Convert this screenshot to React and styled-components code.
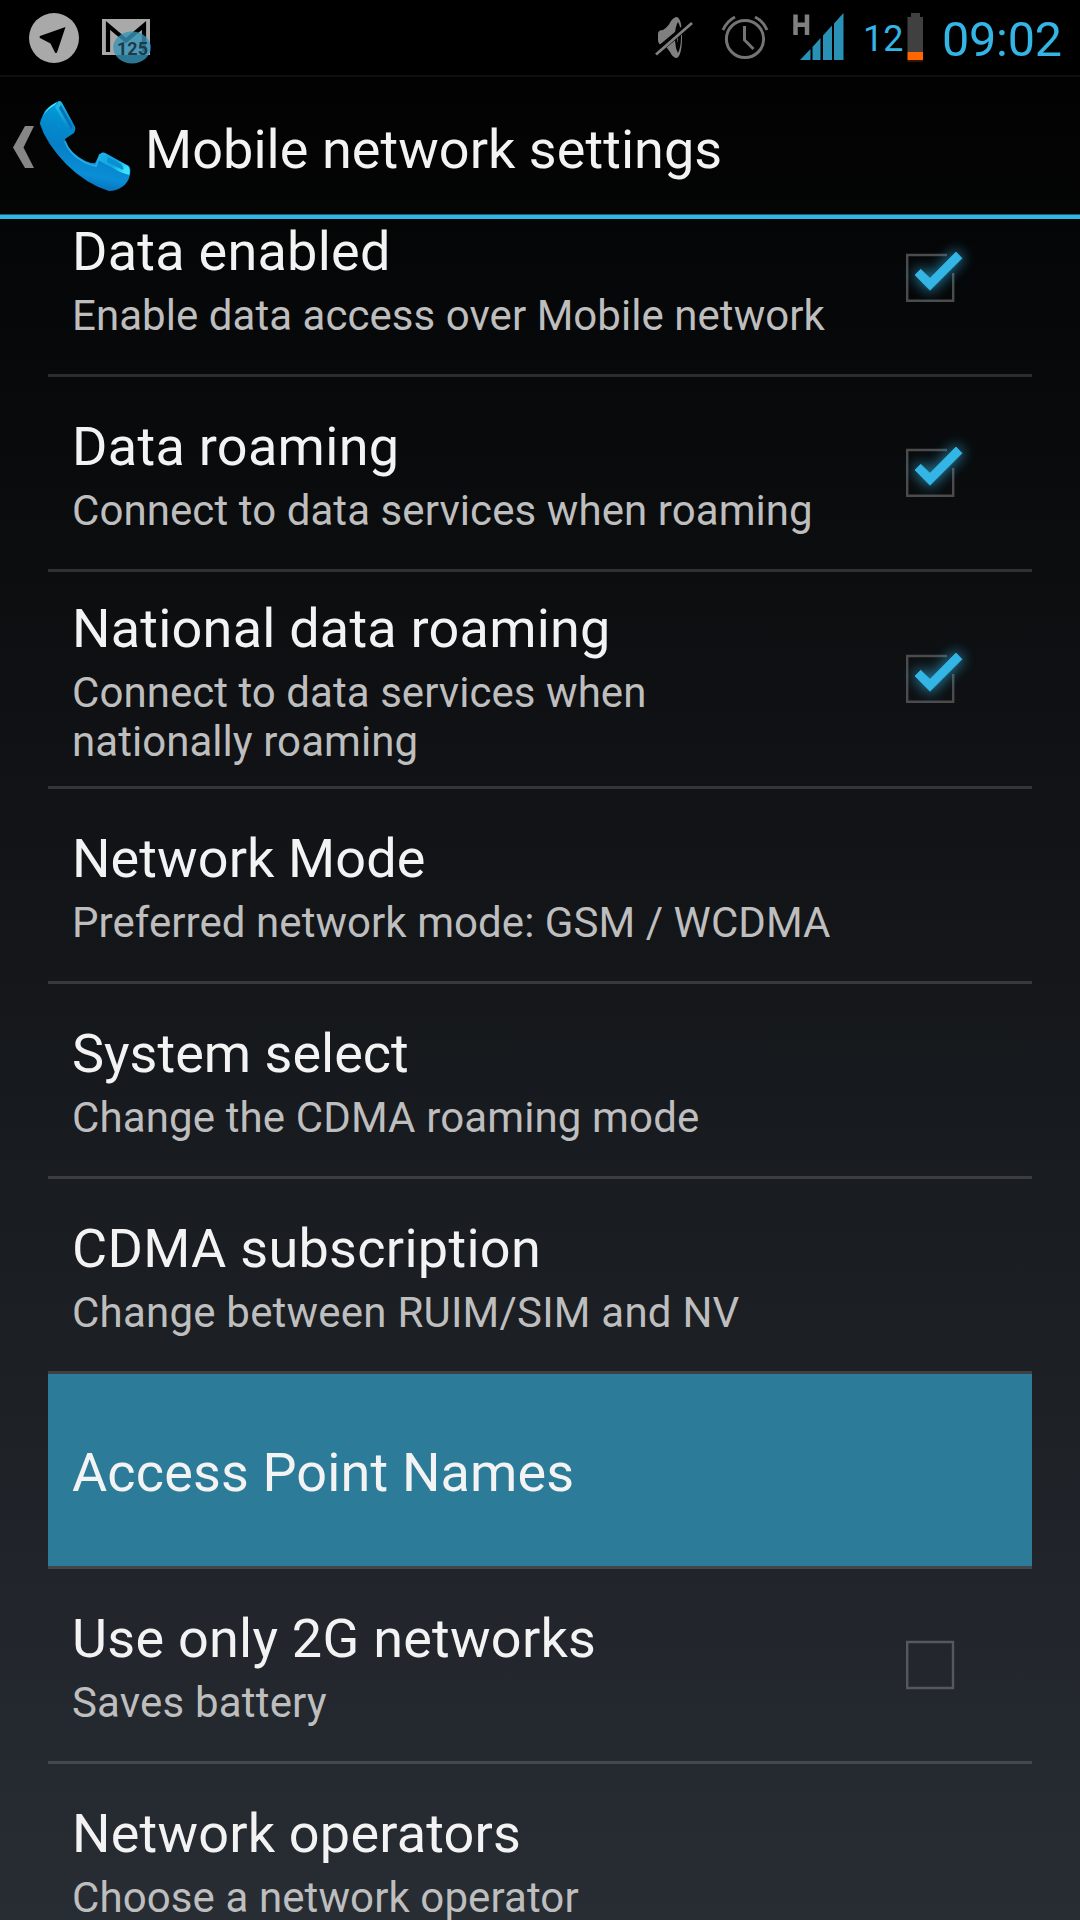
import React from 'react';
import styled, { createGlobalStyle } from 'styled-components';

const GlobalStyle = createGlobalStyle`
  * {
    box-sizing: border-box;
  }

  body {
    margin: 0;
    background: #000000;
    font-family: Roboto, 'Noto Sans', sans-serif;
  }
`;

const Screen = styled.div`
  display: flex;
  flex-direction: column;
  width: 1080px;
  height: 1920px;
  overflow: hidden;
  background: linear-gradient(#000000, #282d34);
`;

const StatusBar = styled.div`
  display: flex;
  flex: none;
  justify-content: space-between;
  height: 75px;
  padding: 0 16px 0 29px;
  background: #000000;
`;

const StatusGroup = styled.div`
  display: flex;
  align-items: flex-start;
`;

const StatusIcon = styled.svg`
  flex: none;
  display: block;
  width: ${(props) => props.$width}px;
  height: 75px;
  margin-left: ${(props) => props.$gap || 0}px;
`;

const BatteryLevel = styled.span`
  width: 43px;
  margin-left: 18px;
  padding-top: 18px;
  color: #33b5e5;
  font-size: 36px;
  line-height: 42px;
`;

const Clock = styled.span`
  width: 124px;
  margin-left: 16px;
  padding: 11px 0 0 2px;
  color: #33b5e5;
  font-size: 48.5px;
  line-height: 57px;
  letter-spacing: -0.2px;
`;

const ActionBar = styled.div`
  display: flex;
  flex: none;
  align-items: flex-start;
  height: 144px;
  padding-left: 12px;
  border-top: 2px solid #0e0e0e;
  border-bottom: 4px solid #33b5e5;
  box-shadow: inset 0 -1px 0 #1c6078;
`;

const HeaderIcon = styled.svg`
  flex: none;
  display: block;
  width: ${(props) => props.$width}px;
  height: 138px;
`;

const Heading = styled.h1`
  margin: 0 0 0 11px;
  padding-top: 41px;
  color: #f3f3f3;
  font-size: 54px;
  font-weight: 400;
  line-height: 64px;
  white-space: nowrap;
  letter-spacing: 0.05px;
`;

const List = styled.div`
  flex: 1;
  min-height: 0;
  overflow: hidden;
  padding: 0 48px;
`;

/* the list is scrolled down a little, so the first row starts under the bar */
const Scroller = styled.div`
  margin-top: -37px;
`;

const Row = styled.div`
  display: flex;
  align-items: center;
  justify-content: space-between;
  height: ${(props) => (props.$tall ? 217 : 195)}px;
  padding: 0 48px 0 24px;
  border-bottom: 3px solid rgba(255, 255, 255, 0.15);
  background: ${(props) => (props.$pressed ? '#2c7b99' : 'transparent')};
  background-clip: padding-box;
`;

const Labels = styled.div`
  padding-top: ${(props) => (props.$single ? 6 : 4)}px;
`;

const Title = styled.div`
  color: #f3f3f3;
  font-size: 54px;
  line-height: 64px;
  white-space: nowrap;
  letter-spacing: ${(props) => props.$spacing || 0}px;
`;

const Summary = styled.div`
  margin-top: 7px;
  color: #bebebe;
  font-size: 42px;
  line-height: 49px;
  white-space: pre;
  letter-spacing: ${(props) => props.$spacing || 0}px;
`;

const CheckSvg = styled.svg`
  flex: none;
  display: block;
  width: 96px;
  height: 96px;
  overflow: visible;
`;

const Checkbox = ({ checked }) => (
  <CheckSvg viewBox="0 0 96 96" fill="none">
    <defs>
      <filter id="glow" x="-60%" y="-60%" width="220%" height="220%">
        <feGaussianBlur stdDeviation="6.500" />
      </filter>
    </defs>
    {checked ? (
      <>
        <path d="M59 25H19.200v45.800h46V43" stroke="#4b4b4b" strokeWidth="2.400" />
        <path
          d="M27 45l5.7-5.7 9.3 9L68 22l6 6.3-32 32z"
          fill="#33b5e5"
          stroke="#33b5e5"
          strokeWidth="4"
          opacity="0.65"
          filter="url(#glow)"
        />
        <path
          d="M27 45l5.7-5.7 9.3 9L68 22l6 6.3-32 32z"
          fill="#33b5e5"
          stroke="#33b5e5"
          strokeWidth="0.800"
        />
      </>
    ) : (
      <path d="M19.200 25h45.800v46H19.200z" stroke="#55595c" strokeWidth="2.400" />
    )}
  </CheckSvg>
);

const TelegramIcon = () => (
  <StatusIcon $width={50} viewBox="29 0 50 75">
    <circle cx="54" cy="38" r="25" fill="#a9a9a9" />
    <path
      d="M65.5 27L57 52.5q-1 1-2 0L50.5 43.500 40 38q-1-1 0-2z"
      fill="#000000"
    />
  </StatusIcon>
);

const MailIcon = () => (
  <StatusIcon $width={50} $gap={22} viewBox="101 0 50 75">
    <path d="M102 19h48v36h-48z" fill="#a9a9a9" />
    <path
      d="M108 52V25.500l18 15 18-15V52"
      fill="none"
      stroke="#000000"
      strokeWidth="4.200"
    />
    <ellipse
      cx="132"
      cy="47.500"
      rx="18.800"
      ry="16"
      fill="#3593b8"
      fillOpacity="0.8"
    />
    <text
      x="132.500"
      y="55"
      textAnchor="middle"
      fill="#1d3a48"
      fontSize="18"
      fontWeight="700"
      fontFamily="Roboto, sans-serif"
    >
      125
    </text>
  </StatusIcon>
);

const MuteIcon = () => (
  <StatusIcon $width={40} viewBox="654 0 40 75">
    <path
      d="M658 34q0-4 5-4 5-3 8-9 3-4 6-4 5 2 5 20t-5 21q-4 0-7-6-3-5-7-7-5 0-5-5z"
      fill="#808080"
    />
    <path d="M678 22q3 5 3 15t-3 16q-3-5-3-16t3-15z" fill="#000000" />
    <path d="M677 31q2 6 0 12z" fill="#808080" />
    <path d="M655 53l37-31" stroke="#000000" strokeWidth="6.500" />
    <path d="M656 54.500L692 23" stroke="#808080" strokeWidth="2.800" />
  </StatusIcon>
);

const AlarmIcon = () => (
  <StatusIcon $width={48} $gap={27} viewBox="721 0 48 75">
    <g fill="none" stroke="#747474" strokeWidth="3">
      <circle cx="745" cy="39" r="18.600" />
      <path d="M744.500 26v14l9 9" />
      <path d="M723 30q4-9 12-13M767 30q-4-9-12-13" />
    </g>
  </StatusIcon>
);

const SignalIcon = () => (
  <StatusIcon $width={52} $gap={24} viewBox="793 0 52 75">
    <path
      d="M795.500 14.500v20.500M807 14.500v20.500M795.500 24.700H807"
      fill="none"
      stroke="#808080"
      strokeWidth="4.500"
    />
    <path
      d="M800 60l10.500-11v11zM812.500 60V47l8-9v22zM823 60V35.500l9-10V60zM834 60V23.500L843.500 13v47z"
      fill="#2990b6"
    />
  </StatusIcon>
);

const BatteryIcon = () => (
  <StatusIcon $width={18} viewBox="906 0 18 75">
    <path d="M911 13h9v4h3v35h-15.500V17h3.500z" fill="#404040" />
    <path d="M907.500 52H923v8h-15.500z" fill="#ff6600" />
    <path d="M907.500 60H923v2h-15.500z" fill="#331400" />
  </StatusIcon>
);

const BackIcon = () => (
  <HeaderIcon $width={24} viewBox="12 77 24 138">
    <path d="M25 126h9l-10.500 21.500L34 168h-9l-12-20.500z" fill="#868686" />
  </HeaderIcon>
);

const PhoneIcon = () => (
  <HeaderIcon $width={98} viewBox="36 77 98 138">
    <defs>
      <linearGradient id="handset" x1="0.600" y1="0" x2="0.400" y2="1">
        <stop offset="0" stopColor="#00a5dc" />
        <stop offset="0.350" stopColor="#0489cc" />
        <stop offset="0.550" stopColor="#067fc8" />
        <stop offset="0.800" stopColor="#0a8ed6" />
        <stop offset="1" stopColor="#0468b2" />
      </linearGradient>
      <linearGradient id="ear" x1="0" y1="0" x2="0.600" y2="1">
        <stop offset="0" stopColor="#22c4f0" />
        <stop offset="1" stopColor="#0787c9" />
      </linearGradient>
      <linearGradient id="mouth" x1="0" y1="0" x2="1" y2="0.500">
        <stop offset="0" stopColor="#1bb4ea" />
        <stop offset="0.600" stopColor="#0da5e2" />
        <stop offset="1" stopColor="#3ae3fb" />
      </linearGradient>
    </defs>
    <path
      d="M59 101q2 0 3 2l13 24q1 3-1 6l-9 6q0 3 4 9 9 11 22 15l4 0 5-9q2-2 5-1l24 13q2 2 1 9-2 8-8 12-6 4-13 4-23-7-43-27-20-21-26-40 0-4 5-13 5-6 14-10z"
      fill="url(#handset)"
    />
    <path d="M59 101q2 0 3 2l13 24q1 3-2 4l-5-2-13-22z" fill="url(#ear)" />
    <path d="M57 102l-5 3q-7 5-9 12 2-5 6-8 4-3 6-4z" fill="#49e7fa" />
    <path d="M61 105l11 20q1 3-1 4l-12-21z" fill="#0573b8" />
    <path
      d="M101 153q2-1 4 0l23 13q3 4 1 9l-9-3-22-12z"
      fill="url(#mouth)"
    />
    <path d="M108 157l13 7q3 3 2 6l-16-8z" fill="#0791cf" />
    <path
      d="M65 141q4 13 19 21 6 3 12 4l4-12"
      fill="none"
      stroke="#2fc0ec"
      strokeWidth="1.800"
      opacity="0.700"
    />
  </HeaderIcon>
);

/* spacing: letter spacing of the title and of the summary */
const settings = [
  {
    title: 'Data enabled',
    summary: 'Enable data access over Mobile network',
    spacing: [0.25, 0.05],
    checked: true,
  },
  {
    title: 'Data roaming',
    summary: 'Connect to data services when roaming',
    spacing: [0.3, 0.08],
    checked: true,
  },
  {
    title: 'National data roaming',
    summary: 'Connect to data services when\nnationally roaming',
    spacing: [0.22, 0.05],
    checked: true,
    tall: true,
  },
  {
    title: 'Network Mode',
    summary: 'Preferred network mode: GSM / WCDMA',
    spacing: [0.1, 0.06],
  },
  {
    title: 'System select',
    summary: 'Change the CDMA roaming mode',
    spacing: [0, 0.13],
  },
  {
    title: 'CDMA subscription',
    summary: 'Change between RUIM/SIM and NV',
    spacing: [0.29, 0.22],
  },
  { title: 'Access Point Names', spacing: [0.14, 0], pressed: true },
  {
    title: 'Use only 2G networks',
    summary: 'Saves battery',
    spacing: [0.25, 0.18],
    checked: false,
  },
  {
    title: 'Network operators',
    summary: 'Choose a network operator',
    spacing: [0.2, 0.1],
  },
];

const SettingRow = ({ item }) => (
  <Row $tall={item.tall} $pressed={item.pressed}>
    <Labels $single={!item.summary}>
      <Title $spacing={item.spacing[0]}>{item.title}</Title>
      {item.summary && (
        <Summary $spacing={item.spacing[1]}>{item.summary}</Summary>
      )}
    </Labels>
    {item.checked !== undefined && <Checkbox checked={item.checked} />}
  </Row>
);

const App = () => {
  return (
    <Screen>
      <GlobalStyle />
      <StatusBar>
        <StatusGroup>
          <TelegramIcon />
          <MailIcon />
        </StatusGroup>
        <StatusGroup>
          <MuteIcon />
          <AlarmIcon />
          <SignalIcon />
          <BatteryLevel>12</BatteryLevel>
          <BatteryIcon />
          <Clock>09:02</Clock>
        </StatusGroup>
      </StatusBar>
      <ActionBar>
        <BackIcon />
        <PhoneIcon />
        <Heading>Mobile network settings</Heading>
      </ActionBar>
      <List>
        <Scroller>
          {settings.map((item) => (
            <SettingRow key={item.title} item={item} />
          ))}
        </Scroller>
      </List>
    </Screen>
  );
};

export default App;
